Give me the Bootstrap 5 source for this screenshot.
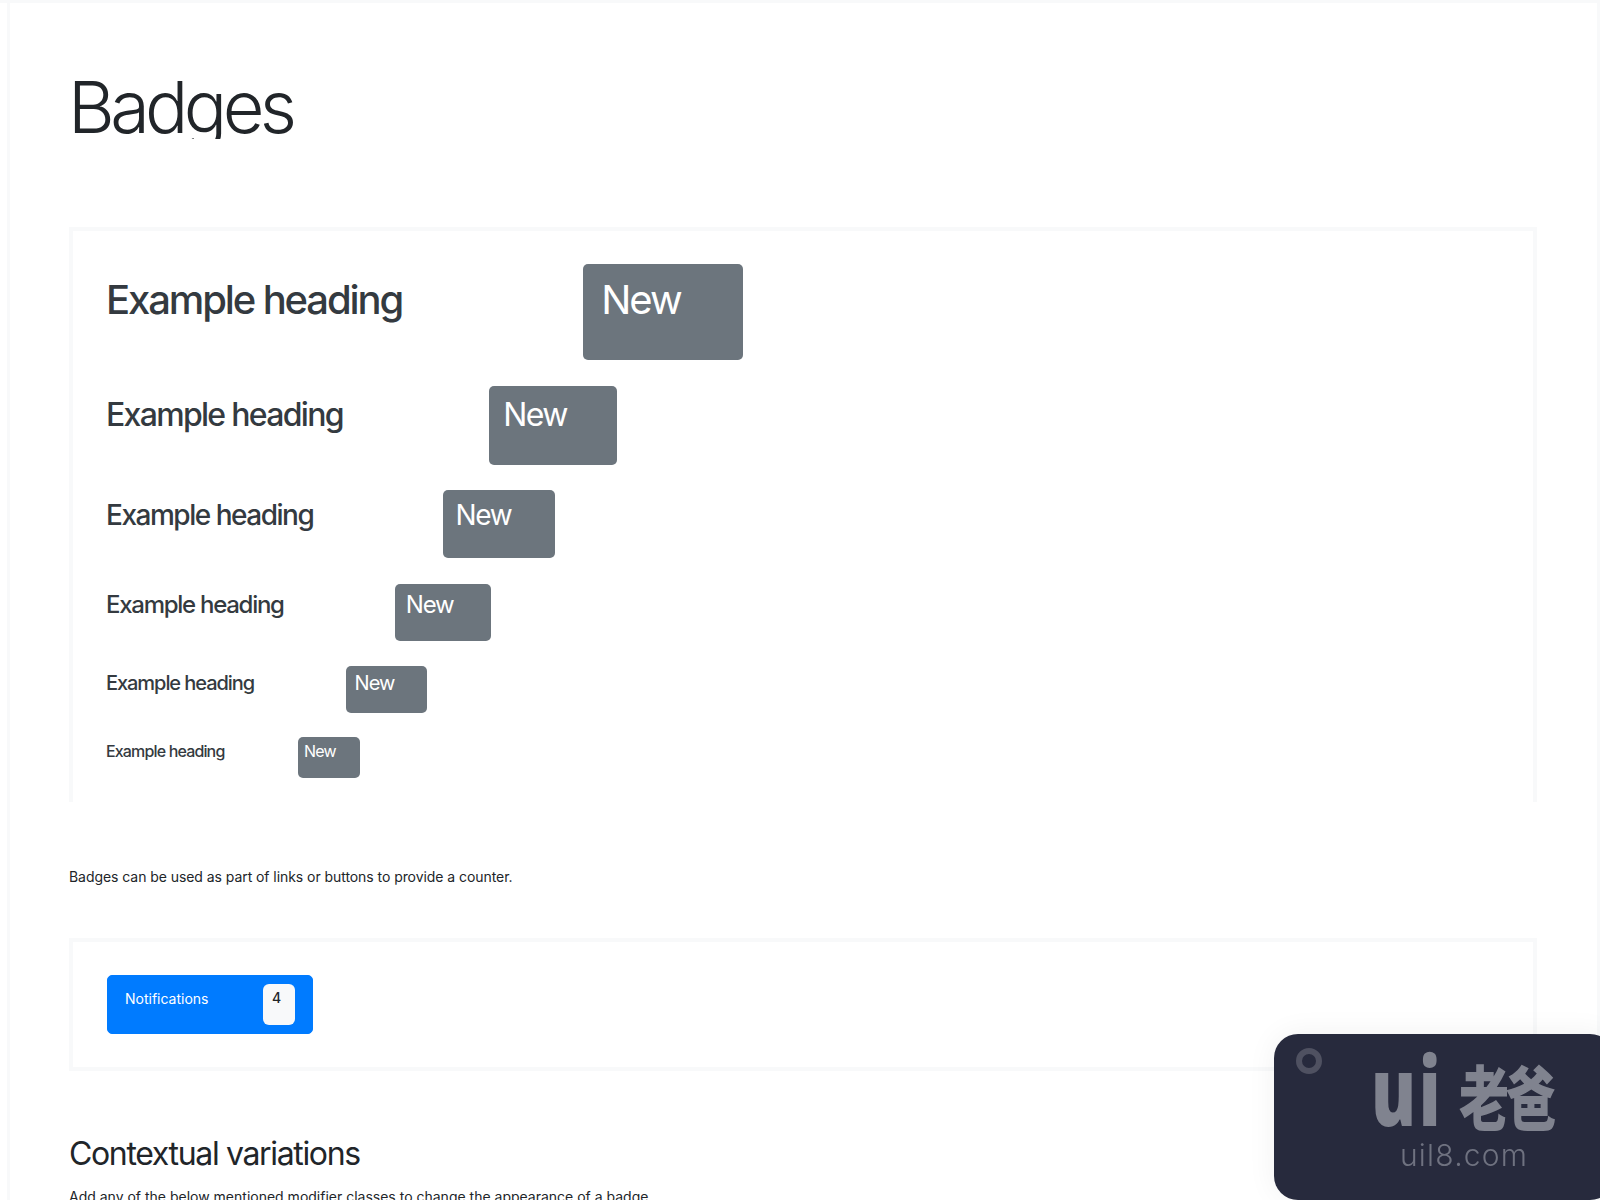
<!DOCTYPE html>
<html lang="en">
<head>
  <meta charset="UTF-8">
  <meta name="viewport" content="width=device-width, initial-scale=1.0">
  <title>Badges</title>
  <link href="https://cdn.jsdelivr.net/npm/bootstrap@5.3.0/dist/css/bootstrap.min.css" rel="stylesheet">
  <style>
    html, body { height: 1200px; overflow: hidden; }
    body { font-family: "Inter", "Liberation Sans", sans-serif; color: #212529; background: #fff; font-size: 14px; border-top: 3px solid #f8f9fa; }
    .page-frame { height: 1197px; overflow: hidden; margin-left: 7px; padding: 66px 60px 0 59px; border-left: 3px solid #f8f9fa; border-right: 3px solid #f8f9fa; }
    .page-title { font-size: 72px; font-weight: 300; line-height: 75px; height: 70px; overflow: hidden; margin: 0 0 88px -1px; letter-spacing: -4.6px; }
    .demo-box { border: 4px solid #f8f9fa; padding: 33px 33px; width: 1468px; }
    .demo-open { height: 575px; border-bottom: 0; overflow: hidden; }
    .demo-row { display: flex; align-items: flex-start; color: #343a40; font-weight: 500; line-height: 1; margin-bottom: 25.6px; letter-spacing: -.053em; }
    .demo-label { width: 11.93em; padding-top: .4em; margin-right: 1px; letter-spacing: -.053em; }
    .demo-badge { display: block; width: 4em; height: 2.4em; padding: .4em .45em; font-size: 1em; font-weight: 400; line-height: 1; text-align: left; letter-spacing: -.05em; border-radius: 5px; background: #6c757d; color: #fff; }
    h1.demo-row .demo-label { margin-right: 0; }
    h2.demo-row .demo-label { padding-top: .43em; }
    h2.demo-row .demo-badge { height: 2.47em; padding-top: .43em; }
    h3.demo-row .demo-label, h4.demo-row .demo-label { width: 12em; }
    h3.demo-row .demo-badge { height: 2.43em; }
    h4.demo-row .demo-badge { height: 2.375em; }
    h5.demo-row { margin-bottom: 24px; }
    h5.demo-row .demo-label { padding-top: .35em; }
    h5.demo-row .demo-badge { width: 4.05em; height: 2.35em; padding-top: .35em; }
    h6.demo-row .demo-label { padding-top: .35em; }
    h6.demo-row .demo-badge { width: 3.875em; height: 2.56em; padding-top: .35em; padding-left: .38em; }
    .intro-text { margin: 65px 0 51px; line-height: 20px; letter-spacing: -.06px; }
    .notify-btn { display: flex; width: 206px; height: 59px; margin-left: 1px; padding: 9px 17px; justify-content: space-between; text-align: left; font-size: 14px; line-height: 28px; background: #007bff; border-color: #007bff; border-radius: 5px; }
    .notify-count { width: 32px; height: 41px; padding: 6px 9px; font-size: 14px; font-weight: 500; line-height: 16px; text-align: left; border-radius: 6px; background: #f8f9fa; color: #212529; }
    .variation-title { font-size: 32px; font-weight: 400; line-height: 36px; margin: 65px 0 14px; letter-spacing: -.042em; }
    .wm-tag { position: fixed; left: 1274px; top: 1034px; width: 340px; height: 166px; border-radius: 24px; background: #272a3d; box-shadow: 0 0 30px rgba(0,0,0,.06); color: #80838f; }
    .wm-hole { position: absolute; left: 22px; top: 14px; width: 26px; height: 26px; border: 6px solid #4f5161; border-radius: 50%; }
    .wm-ui { position: absolute; left: 97px; top: 15px; font-family: "Noto Sans", sans-serif; font-size: 96px; font-weight: 900; line-height: 80px; letter-spacing: 4px; transform: scaleX(.7); transform-origin: left center; }
    .wm-cn { position: absolute; left: 185px; top: 30px; font-family: "Noto Sans CJK SC", sans-serif; font-size: 50px; font-weight: 900; line-height: 60px; white-space: nowrap; letter-spacing: -3px; transform: scaleY(1.4); }
    .wm-site { position: absolute; left: 126px; top: 106px; font-family: "Inter", sans-serif; font-size: 30px; font-weight: 300; line-height: 30px; letter-spacing: 1.2px; color: #6f7280; }
  </style>
</head>
<body>
  <div class="page-frame">
    <h1 class="page-title">Badges</h1>

    <div class="demo-box demo-open">
      <h1 class="demo-row"><span class="demo-label">Example heading</span><span class="badge demo-badge">New</span></h1>
      <h2 class="demo-row"><span class="demo-label">Example heading</span><span class="badge demo-badge">New</span></h2>
      <h3 class="demo-row"><span class="demo-label">Example heading</span><span class="badge demo-badge">New</span></h3>
      <h4 class="demo-row"><span class="demo-label">Example heading</span><span class="badge demo-badge">New</span></h4>
      <h5 class="demo-row"><span class="demo-label">Example heading</span><span class="badge demo-badge">New</span></h5>
      <h6 class="demo-row"><span class="demo-label">Example heading</span><span class="badge demo-badge">New</span></h6>
    </div>

    <p class="intro-text">Badges can be used as part of links or buttons to provide a counter.</p>

    <div class="demo-box">
      <button type="button" class="btn btn-primary notify-btn">Notifications <span class="badge notify-count">4</span></button>
    </div>

    <h2 class="variation-title">Contextual variations</h2>
    <p>Add any of the below mentioned modifier classes to change the appearance of a badge.</p>
  </div>

  <div class="wm-tag">
    <span class="wm-hole"></span>
    <span class="wm-ui">ui</span>
    <span class="wm-cn">老爸</span>
    <span class="wm-site">uil8.com</span>
  </div>

  <script src="https://cdn.jsdelivr.net/npm/bootstrap@5.3.0/dist/js/bootstrap.bundle.min.js"></script>
</body>
</html>
